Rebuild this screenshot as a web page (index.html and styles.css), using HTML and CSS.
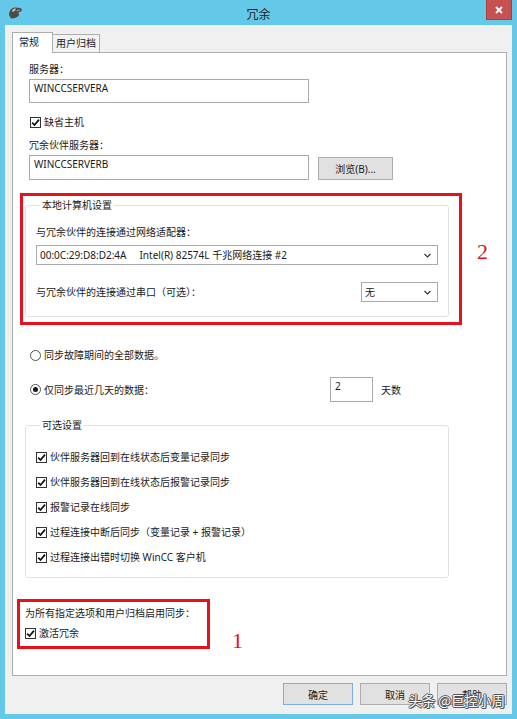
FILE: index.html
```html
<!DOCTYPE html>
<html lang="zh-CN">
<head>
    <meta charset="UTF-8">
    <meta name="viewport" content="width=device-width, initial-scale=1.0">
    <title>冗余</title>
    <link rel="stylesheet" href="styles.css">
</head>
<body>
<div class="window">
    <div class="titlebar">
        <svg class="app-icon" width="15" height="14" viewBox="0 0 15 14">
            <path d="M1 9 C1 5 3 2 7 1.5 L12.5 2 C14 2.8 14.2 4.6 13 5.6 L10.5 6.5 L11 9.5 C9 11.5 6 12.8 3 12.5 Z" fill="#4b4b4b"/>
            <path d="M4 4.5 C5 3 6.5 2.5 8 2.6 L7 5 L4.5 6 Z" fill="#b9b9b9"/>
            <path d="M8.5 4 L12 3.6 L12.4 4.6 L9 5.6 Z" fill="#8d8d8d"/>
        </svg>
        <div class="title">冗余</div>
        <div class="close">
            <svg width="8" height="8" viewBox="0 0 8 8"><path d="M1 1 L7 7 M7 1 L1 7" stroke="#fff" stroke-width="1.8"/></svg>
        </div>
    </div>

    <div class="client">
        <div class="tabs">
            <div class="tab active">常规</div>
            <div class="tab">用户归档</div>
        </div>

        <div class="panel">
            <div class="label first">服务器：</div>
            <div class="edit">WINCCSERVERA</div>

            <div class="check host">
                <span class="box"><svg width="9" height="9" viewBox="0 0 9 9"><path d="M1.2 4.6 L3.5 7 L8 1.6" stroke="#111" stroke-width="1.7" fill="none"/></svg></span>
                缺省主机
            </div>

            <div class="label">冗余伙伴服务器：</div>
            <div class="edit-row">
                <div class="edit">WINCCSERVERB</div>
                <button class="btn browse">浏览(B)...</button>
            </div>

            <div class="mark-row local">
                <div class="redbox local-box">
                    <fieldset class="group local-group">
                        <legend>本地计算机设置</legend>
                        <div class="group-label">与冗余伙伴的连接通过网络适配器：</div>
                        <div class="combo wide">
                            <span>00:0C:29:D8:D2:4A</span><span class="nic">Intel(R) 82574L 千兆网络连接 #2</span>
                            <svg class="arrow" width="7" height="5" viewBox="0 0 7 5"><path d="M0.5 1 L3.5 4 L6.5 1" stroke="#333" stroke-width="1.2" fill="none"/></svg>
                        </div>
                        <div class="serial-row">
                            <span>与冗余伙伴的连接通过串口（可选）：</span>
                            <div class="combo narrow">
                                <span>无</span>
                                <svg class="arrow" width="7" height="5" viewBox="0 0 7 5"><path d="M0.5 1 L3.5 4 L6.5 1" stroke="#333" stroke-width="1.2" fill="none"/></svg>
                            </div>
                        </div>
                    </fieldset>
                </div>
                <div class="mark-num two">2</div>
            </div>

            <div class="radio-row all">
                <span class="radio"></span>同步故障期间的全部数据。
            </div>
            <div class="radio-row days">
                <span class="radio-label"><span class="radio on"></span>仅同步最近几天的数据：</span>
                <div class="days-edit">2</div>
                <span class="days-unit">天数</span>
            </div>

            <fieldset class="group options">
                <legend>可选设置</legend>
                <div class="check opt">
                    <span class="box"><svg width="9" height="9" viewBox="0 0 9 9"><path d="M1.2 4.6 L3.5 7 L8 1.6" stroke="#111" stroke-width="1.7" fill="none"/></svg></span>
                    伙伴服务器回到在线状态后变量记录同步
                </div>
                <div class="check opt">
                    <span class="box"><svg width="9" height="9" viewBox="0 0 9 9"><path d="M1.2 4.6 L3.5 7 L8 1.6" stroke="#111" stroke-width="1.7" fill="none"/></svg></span>
                    伙伴服务器回到在线状态后报警记录同步
                </div>
                <div class="check opt">
                    <span class="box"><svg width="9" height="9" viewBox="0 0 9 9"><path d="M1.2 4.6 L3.5 7 L8 1.6" stroke="#111" stroke-width="1.7" fill="none"/></svg></span>
                    报警记录在线同步
                </div>
                <div class="check opt">
                    <span class="box"><svg width="9" height="9" viewBox="0 0 9 9"><path d="M1.2 4.6 L3.5 7 L8 1.6" stroke="#111" stroke-width="1.7" fill="none"/></svg></span>
                    过程连接中断后同步（变量记录 + 报警记录）
                </div>
                <div class="check opt">
                    <span class="box"><svg width="9" height="9" viewBox="0 0 9 9"><path d="M1.2 4.6 L3.5 7 L8 1.6" stroke="#111" stroke-width="1.7" fill="none"/></svg></span>
                    过程连接出错时切换 WinCC 客户机
                </div>
            </fieldset>

            <div class="mark-row activate">
                <div class="redbox activate-box">
                    <div class="label-plain">为所有指定选项和用户归档启用同步：</div>
                    <div class="check act">
                        <span class="box"><svg width="9" height="9" viewBox="0 0 9 9"><path d="M1.2 4.6 L3.5 7 L8 1.6" stroke="#111" stroke-width="1.7" fill="none"/></svg></span>
                        激活冗余
                    </div>
                </div>
                <div class="mark-num one">1</div>
            </div>
        </div>

        <div class="buttons">
            <button class="btn default">确定</button>
            <button class="btn">取消</button>
            <button class="btn">帮助</button>
        </div>
    </div>

    <div class="watermark">头条 @巨控小周</div>
</div>
</body>
</html>
```

FILE: styles.css
```css
* {
    box-sizing: border-box;
}
body {
    margin: 0;
    font-family: "Noto Sans", "Noto Sans CJK SC", sans-serif;
    font-size: 10px;
    line-height: 14px;
    color: #1a1a1a;
}
.window {
    position: relative;
    width: 517px;
    height: 719px;
    background: #64c8e8;
    padding: 0 5px 5px 5px;
}
.titlebar {
    height: 25px;
    display: grid;
    grid-template-columns: 1fr auto 1fr;
    align-items: start;
}
.app-icon {
    margin: 6px 0 0 3px;
}
.title {
    font-family: "Noto Sans CJK SC", sans-serif;
    font-size: 12px;
    line-height: 16px;
    margin-top: 6px;
    color: #222;
}
.close {
    justify-self: end;
    width: 26px;
    height: 20px;
    background: #c75050;
    border: 1px solid #a84040;
    border-top: none;
    display: flex;
    align-items: center;
    justify-content: center;
}
.client {
    height: 689px;
    background: #f0f0f0;
    padding: 7px 5px 0 7px;
}
.tabs {
    display: flex;
    align-items: flex-end;
    height: 20px;
}
.tab {
    height: 18px;
    line-height: 17px;
    width: 47px;
    padding-left: 3px;
    background: #f3f3f3;
    border: 1px solid #adadad;
    border-left: none;
    border-bottom: none;
}
.tab.active {
    position: relative;
    z-index: 1;
    width: 41px;
    height: 21px;
    line-height: 19px;
    padding-left: 6px;
    margin-bottom: -1px;
    background: #fff;
    border-left: 1px solid #adadad;
}
.panel {
    height: 624px;
    background: #fff;
    border: 1px solid #adadad;
}
.label {
    margin: 9px 0 0 16px;
}
.label.first {
    margin-top: 9px;
}
.edit {
    width: 280px;
    height: 24px;
    margin: 3px 0 0 16px;
    padding: 1px 4px;
    border: 1px solid #a9abb0;
    background: #fff;
}
.edit-row {
    display: flex;
    align-items: flex-start;
    margin: 3px 0 0 16px;
}
.edit-row .edit {
    margin: 0;
    height: 25px;
}
.btn {
    font-family: "Noto Sans", "Noto Sans CJK SC", sans-serif;
    font-size: 10px;
    color: #1a1a1a;
    width: 70px;
    height: 22px;
    padding: 0;
    background: #e1e1e1;
    border: 1px solid #adadad;
}
.btn.browse {
    width: 75px;
    height: 23px;
    margin: 2px 0 0 9px;
}
.btn.default {
    border-color: #7eaedb;
}
.check {
    display: flex;
    align-items: center;
    height: 14px;
}
.box {
    width: 11px;
    height: 11px;
    margin-right: 3px;
    border: 1px solid #333;
    background: #fff;
    display: flex;
    align-items: center;
    justify-content: center;
}
.check.host {
    margin: 12px 0 0 17px;
}
.mark-row {
    display: flex;
    align-items: flex-start;
}
.mark-row.local {
    margin: 13px 0 0 7px;
}
.redbox {
    border: 3px solid #e5111c;
}
.local-box {
    width: 442px;
    height: 132px;
}
.mark-num {
    font-family: "Liberation Serif", serif;
    font-size: 22px;
    line-height: 22px;
    color: #e5111c;
}
.mark-num.two {
    margin: 48px 0 0 15px;
}
.mark-num.one {
    margin: 31px 0 0 22px;
}
.group {
    margin: 0;
    min-width: 0;
    border: 1px solid #dde2e7;
    border-radius: 3px;
}
.group legend {
    margin-left: 4px;
    padding: 0 2px;
    line-height: 14px;
}
.local-group {
    width: 424px;
    margin: 2px 0 0 2px;
    padding: 0 10px 14px 10px;
}
.group-label {
    margin-top: 13px;
}
.combo {
    position: relative;
    display: flex;
    align-items: center;
    height: 20px;
    padding-left: 3px;
    border: 1px solid #a9abb0;
    background: #fff;
}
.combo .arrow {
    margin-left: auto;
    margin-right: 6px;
}
.combo.wide {
    width: 402px;
    margin-top: 6px;
}
.combo .nic {
    margin-left: 13px;
}
.combo.narrow {
    width: 77px;
}
.serial-row {
    display: flex;
    align-items: center;
    justify-content: space-between;
    height: 20px;
    margin-top: 17px;
}
.radio-row {
    display: flex;
    align-items: center;
    margin-left: 17px;
}
.radio-row.all {
    height: 14px;
    margin-top: 23px;
}
.radio {
    width: 11px;
    height: 11px;
    margin-right: 3px;
    border: 1px solid #555;
    border-radius: 50%;
    background: #fff;
    display: flex;
    align-items: center;
    justify-content: center;
}
.radio.on::after {
    content: "";
    width: 5px;
    height: 5px;
    border-radius: 50%;
    background: #1a1a1a;
}
.radio-row.days {
    height: 25px;
    margin-top: 15px;
}
.radio-label {
    display: flex;
    align-items: center;
    width: 300px;
}
.days-edit {
    width: 43px;
    height: 25px;
    padding: 1px 4px;
    border: 1px solid #a9abb0;
}
.days-unit {
    margin-left: 8px;
}
.options {
    width: 424px;
    margin: 16px 0 0 12px;
    padding: 0 10px 13px 10px;
}
.check.opt {
    margin-top: 11px;
}
.check.opt:first-of-type {
    margin-top: 18px;
}
.mark-row.activate {
    margin: 21px 0 0 4px;
}
.activate-box {
    width: 193px;
    height: 50px;
    padding: 4px 0 0 5px;
}
.check.act {
    margin-top: 6px;
}
.buttons {
    display: flex;
    justify-content: flex-end;
    gap: 7px;
    margin-top: 7px;
}
.watermark {
    position: absolute;
    right: 12px;
    bottom: 11px;
    font-family: "Noto Sans CJK SC", sans-serif;
    font-size: 13.5px;
    line-height: 16px;
    color: #fff;
    text-shadow: -1px 0 #555, 1px 0 #555, 0 -1px #555, 0 1px #555, 1px 1px #555;
}
```
